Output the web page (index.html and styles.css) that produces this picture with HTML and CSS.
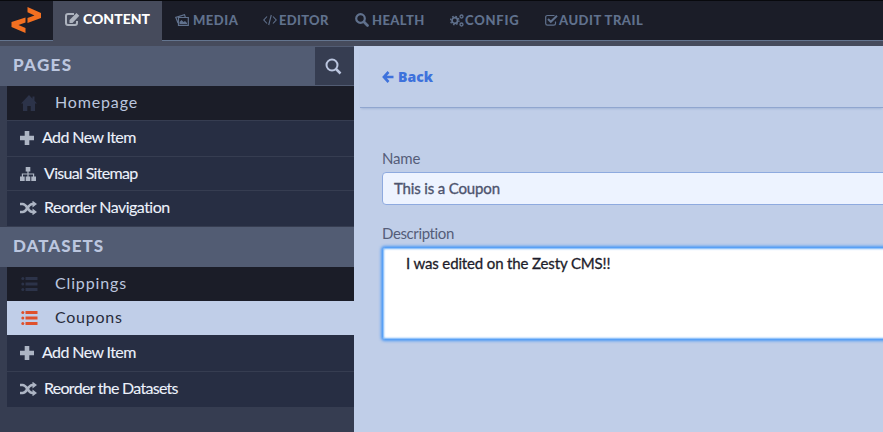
FILE: index.html
```html
<!DOCTYPE html>
<html lang="en">
<head>
<meta charset="utf-8">
<title>Coupons</title>
<link rel="stylesheet" href="styles.css">
</head>
<body>
<svg class="defs" width="0" height="0">
  <symbol id="plus" viewBox="0 0 14 14"><path d="M4.700 0H9.300V4.700H14V9.300H9.300V14H4.700V9.300H0V4.700H4.700Z"/></symbol>
  <symbol id="shuffle" viewBox="0 0 17 14"><path d="M0 3h2.500c5 0 5 8 10 8H14M0 11h2.500c5 0 5-8 10-8H14" fill="none" stroke="currentColor" stroke-width="2.500"/><path d="M12.500 -.3l4.500 3.300-4.500 3.500zM12.500 7.500l4.500 3.500-4.500 3.300z"/></symbol>
  <symbol id="list" viewBox="0 0 17 14"><path d="M4.500 0H16.500v3H4.500zM4.500 5.500H16.500v3H4.500zM4.500 11H16.500v3H4.500z"/><circle cx="1.800" cy="1.500" r="1.500"/><circle cx="1.800" cy="7" r="1.500"/><circle cx="1.800" cy="12.500" r="1.500"/></symbol>
</svg>
<header class="topbar">
  <a class="logo"><svg width="32" height="28" viewBox="0 0 32 28"><path d="M16.500 1L30 7V12L16.500 17V12L23.500 9.500 16.500 6.300zM14.500 11.500V16.500L7.500 19 14.500 22V27L.5 21V16z"/></svg></a>
  <nav class="nav">
    <a class="tab content active"><svg class="line" width="15" height="13" viewBox="0 0 15 13"><path d="M9 1H3Q1 1 1 3v7q0 2 2 2h7q2 0 2-2V8" stroke-width="2"/><path class="solid" d="M4.500 10V7L11.500 0 14.300 2.800 7.500 10z"/></svg><span>CONTENT</span></a>
    <a class="tab media"><svg class="line" width="14" height="12" viewBox="0 0 14 12" stroke-width="1.200"><path d="M3.500 3.500h9.800v7.800H3.500zM3 9L.8 3.400 9.500.7l.8 2.300"/><path class="solid" d="M4.500 10V8l2-2 2 2 1.500-1 2 2v1z"/></svg><span>MEDIA</span></a>
    <a class="tab editor"><svg class="line" width="14" height="12" viewBox="0 0 14 12" stroke-width="1.100"><path d="M4 2.500L.8 6 4 9.500M10 2.500L13.200 6 10 9.500M8.300 1L5.700 11"/></svg><span>EDITOR</span></a>
    <a class="tab health"><svg class="line" width="14" height="14" viewBox="0 0 14 14"><circle cx="5.500" cy="5.500" r="4.300" stroke-width="2.200"/><path d="M8.800 8.800L12.500 12.500" stroke-width="2.700" stroke-linecap="round"/></svg><span>HEALTH</span></a>
    <a class="tab config"><svg class="line" width="14" height="13" viewBox="0 0 14 13"><circle cx="4.800" cy="6.500" r="2.800" stroke-width="1.800"/><circle cx="4.800" cy="6.500" r="4.200" stroke-width="1.300" stroke-dasharray="1.650"/><circle cx="11.500" cy="2.500" r="1.500" stroke-width="1.300"/><circle cx="11.500" cy="10.500" r="1.500" stroke-width="1.300"/></svg><span>CONFIG</span></a>
    <a class="tab audit"><svg class="line" width="13" height="12" viewBox="0 0 13 12"><path d="M9.500 1.500H2.500Q.7 1.500.7 3v6.500Q.7 11.200 2.500 11.200H8.700Q10.500 11.200 10.500 9.500V7.500" stroke-width="1.200"/><path d="M3 5l2.800 2.800L12 1.800" stroke-width="2"/></svg><span>AUDIT TRAIL</span></a>
  </nav>
</header>
<div class="layout">
  <aside class="sidebar">
    <div class="heading pages"><h2>PAGES</h2><button class="search" aria-label="Search"><svg class="line" width="17" height="17" viewBox="0 0 17 17"><circle cx="7" cy="7" r="5.500" stroke-width="2"/><path d="M11 11l4.500 4.500" stroke-width="2.500"/></svg></button></div>
    <div class="group">
      <a class="row item home"><svg width="16" height="16" viewBox="0 0 16 16"><path d="M8 0l3.500 3.700V1.500h2v4.300L16 8.500h-2V16H9.700v-5H6.300v5H2V8.500H0z"/></svg><span>Homepage</span></a>
      <a class="row action add first"><svg width="14" height="14"><use href="#plus"/></svg><span>Add New Item</span></a>
      <a class="row action sitemap"><svg width="16" height="14" viewBox="0 0 16 14"><path d="M5.700 0h4.600v4.500H5.700zM0 9.500h4.700V14H0zM5.700 9.500h4.600V14H5.700zM11.300 9.500H16V14h-4.700z"/><path d="M8 4v6M2.400 10V7h11.200v3" fill="none" stroke="currentColor" stroke-width="1.200"/></svg><span>Visual Sitemap</span></a>
      <a class="row action reorder"><svg width="17" height="14"><use href="#shuffle"/></svg><span>Reorder Navigation</span></a>
    </div>
    <div class="heading datasets"><h2>DATASETS</h2></div>
    <div class="group">
      <a class="row item clippings"><svg width="17" height="14"><use href="#list"/></svg><span>Clippings</span></a>
      <a class="row item coupons selected"><svg width="17" height="14"><use href="#list"/></svg><span>Coupons</span></a>
      <a class="row action add second"><svg width="14" height="14"><use href="#plus"/></svg><span>Add New Item</span></a>
      <a class="row action datasets-order"><svg width="17" height="14"><use href="#shuffle"/></svg><span>Reorder the Datasets</span></a>
    </div>
  </aside>
  <main class="main">
    <div class="crumb"><a class="back"><svg class="line" width="12" height="12" viewBox="0 0 12 12" stroke-width="2.600"><path d="M6.500 1L1.900 6l4.600 5M2 6h9.500"/></svg><span>Back</span></a></div>
    <form class="form">
      <label class="name-label"><span>Name</span></label>
      <div class="input"><span>This is a Coupon</span></div>
      <label class="desc-label"><span>Description</span></label>
      <div class="textarea"><span>I was edited on the Zesty CMS!!</span></div>
    </form>
  </main>
</div>
</body>
</html>
```
FILE: styles.css
```css
* { box-sizing: border-box; }
body { margin: 0; width: 883px; height: 432px; overflow: hidden; background: #464b5c; font-family: Lato, "Liberation Sans", sans-serif; }
svg { fill: currentColor; flex: none; display: block; }
.line { fill: none; stroke: currentColor; }
.solid { fill: currentColor; stroke: none; }
span { white-space: nowrap; }
.defs { position: absolute; }
.topbar { display: flex; height: 46px; border-top: 1px solid #08090d; background: linear-gradient(#1b1d28 0 39px, #64758f 39px 40px, #464b5c 40px); }
.logo { width: 53px; padding: 5px 0 0 11px; color: #f37021; }
.nav { display: flex; }
.tab { display: flex; align-items: center; height: 39px; padding-bottom: 1px; color: #60718d; font-size: 13px; font-weight: 900; line-height: 16px; }
.active { height: 45px; padding-bottom: 9px; background: #464b5c; color: #adb3be; font-size: 14px; }
.active span { color: #fff; }
.content { width: 109px; padding-left: 12px; gap: 3px; }
.media { width: 89px; padding-left: 13px; gap: 4px; letter-spacing: .5px; }
.editor { width: 91px; padding-left: 12px; gap: 2px; letter-spacing: .3px; }
.health { width: 96px; padding-left: 13px; gap: 3px; letter-spacing: .4px; }
.config { width: 95px; padding-left: 12px; gap: 1px; letter-spacing: .8px; }
.audit { padding-left: 12px; gap: 1px; letter-spacing: .5px; }
.layout { display: flex; height: 386px; }
.sidebar { width: 354px; background: #363d51; }
.heading { display: flex; justify-content: space-between; height: 40px; padding-left: 13px; background: #525c73; color: #bbc6df; }
.heading h2 { margin: 0; font-size: 17px; line-height: 38px; font-weight: 900; letter-spacing: 1.3px; }
.datasets h2 { letter-spacing: 1px; }
.search { display: flex; align-items: center; justify-content: center; width: 39px; height: 38px; margin-top: 1px; padding: 0 2px 0 0; border: 0; background: #363d51; color: #bbc6df; }
.group { margin-left: 7px; }
.row { display: flex; align-items: center; height: 35px; padding-left: 13px; border-bottom: 1px solid #363d51; background: #272e43; color: #adb5c4; font-size: 16px; }
.row span { padding-bottom: 3px; }
.action span { color: #edf2fc; letter-spacing: -.6px; -webkit-text-stroke: .1px; }
.add { gap: 8px; padding-bottom: 1px; }
.sitemap { gap: 8px; height: 34px; }
.reorder, .datasets-order { gap: 7px; height: 36px; padding-bottom: 2px; }
.sitemap span { letter-spacing: -.67px; }
.reorder span { letter-spacing: -.53px; }
.datasets-order span { letter-spacing: -.72px; }
.first { height: 36px; padding-bottom: 2px; }
.second { height: 37px; }
.item { background: #1b1d28; color: #2c3349; padding-left: 14px; gap: 18px; letter-spacing: .85px; }
.item span { color: #bbc6df; }
.clippings, .coupons { height: 34px; border: 0; gap: 17px; }
.selected { background: #c0cee8; color: #df512c; letter-spacing: .75px; }
.selected span { color: #272b3b; }
.main { flex: 1; background: #c0cee8; }
.crumb { height: 62px; margin-left: 6px; padding: 21px 0 0 22px; border-bottom: 1px solid #90a6cf; box-shadow: 0 2px 2px -1px #a5b8d8; }
.back { display: flex; align-items: center; gap: 4px; color: #3e72dc; font: 800 14px/20px "Open Sans", sans-serif; }
.form { padding: 40px 0 0 28px; color: #555d79; font-size: 15px; }
label { display: block; height: 24px; line-height: 20px; letter-spacing: -.38px; }
.name-label { letter-spacing: -.2px; }
.input { height: 33px; margin-right: -8px; padding-left: 11px; border: 1px solid #8eaadf; border-radius: 4px; background: #edf3ff; font-size: 15px; line-height: 31px; letter-spacing: -.15px; -webkit-text-stroke: .35px; color: #4d546e; }
.desc-label { margin-top: 18px; }
.textarea { height: 93px; margin-right: -8px; padding: 5px 0 0 23px; border: 1px solid #59a0f5; border-radius: 3px; background: #fff; box-shadow: 0 0 3px 1px #4b98f3, inset 0 0 2px 1px #6eb0f8; color: #1d1d2b; font-size: 15px; line-height: 21px; letter-spacing: -.14px; -webkit-text-stroke: .3px; }
```
